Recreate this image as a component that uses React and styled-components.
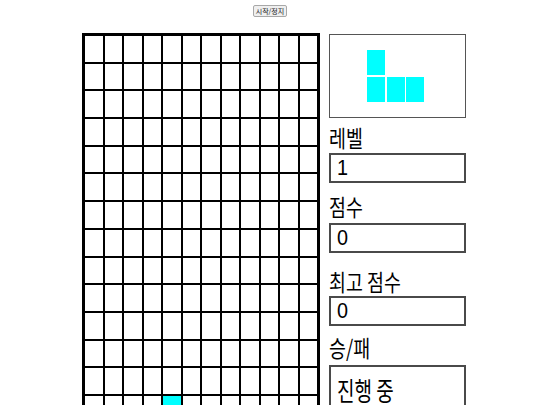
import React from 'react';
import styled, { createGlobalStyle } from 'styled-components';

const GlobalStyle = createGlobalStyle`
    html, body {
        margin: 0;
        padding: 0;
        background: #fff;
        overflow: hidden;
    }
`;

const Page = styled.div`
    padding-top: 5px;
    font-family: "Noto Sans CJK KR", "Noto Sans", sans-serif;
    color: #000;
`;

const Toolbar = styled.div`
    display: flex;
    justify-content: center;
`;

const StartButton = styled.button`
    width: 34px;
    height: 12px;
    padding: 0;
    font-family: "Noto Sans CJK KR", sans-serif;
    font-size: 7px;
    line-height: 10px;
    color: #222;
    background: #efefef;
    border: 1px solid #a8a8a8;
    border-radius: 2px;
`;

const Main = styled.div`
    display: flex;
    align-items: flex-start;
    gap: 9px;
    margin-top: 16px;
    padding-left: 82px;
`;

const Board = styled.div`
    box-sizing: border-box;
    width: 238px;
    display: grid;
    grid-template-columns: repeat(12, 1fr);
    grid-auto-rows: 25.7px;
    gap: 2px;
    padding: 2px;
    border: 1px solid #000;
    background: #000;
`;

const Cell = styled.div`
    background: ${(p) => (p.$filled ? '#00ffff' : '#fff')};
`;

const Panel = styled.div`
    width: 137px;
    display: flex;
    flex-direction: column;
`;

const Preview = styled.div`
    box-sizing: border-box;
    height: 84px;
    margin-top: 1px;
    padding-right: 4px;
    display: flex;
    align-items: center;
    justify-content: center;
    border: 1px solid #555;
`;

const Piece = styled.div`
    display: grid;
    grid-template-columns: repeat(3, 18px);
    grid-template-rows: repeat(2, 25px);
    gap: 1.5px;
`;

const PieceCell = styled.div`
    background: ${(p) => (p.$filled ? '#00ffff' : 'transparent')};
`;

const Label = styled.div`
    height: 24px;
    margin-top: ${(p) => p.$top}px;
    margin-bottom: ${(p) => p.$bottom}px;
    font-size: 23px;
    line-height: 24px;
    white-space: nowrap;

    span {
        display: inline-block;
        transform: scaleX(0.8);
        transform-origin: left center;
    }
`;

const ValueBox = styled.div`
    box-sizing: border-box;
    height: 30px;
    display: flex;
    align-items: center;
    padding-left: 6px;
    border: 2px solid #4a4a4a;
    font-family: "Liberation Sans", Arial, sans-serif;
    font-size: 22px;

    span {
        display: inline-block;
        transform: scaleX(0.9);
        transform-origin: left center;
    }
`;

const StatusBox = styled.div`
    box-sizing: border-box;
    min-height: 70px;
    padding: 8px 0 0 6px;
    border: 2px solid #4a4a4a;
    font-size: 26px;
    line-height: 30px;
    white-space: nowrap;

    span {
        display: inline-block;
        transform: scaleX(0.73);
        transform-origin: left center;
    }
`;

const ROWS = 20;
const COLS = 12;
const board = Array.from({ length: ROWS }, (_, r) =>
    Array.from({ length: COLS }, (_, c) => r === 13 && c === 4)
);

const nextPiece = [
    [1, 0, 0],
    [1, 1, 1],
];

const fields = [
    { label: '레벨', value: '1', top: 7, bottom: 4 },
    { label: '점수', value: '0', top: 11, bottom: 5 },
    { label: '최고 점수', value: '0', top: 16, bottom: 3 },
];

export default function App() {
    return (
        <Page>
            <GlobalStyle />
            <Toolbar>
                <StartButton type="button">시작/정지</StartButton>
            </Toolbar>
            <Main>
                <Board>
                    {board.map((row, r) =>
                        row.map((filled, c) => <Cell key={`${r}-${c}`} $filled={filled} />)
                    )}
                </Board>
                <Panel>
                    <Preview>
                        <Piece>
                            {nextPiece.map((row, r) =>
                                row.map((v, c) => <PieceCell key={`${r}-${c}`} $filled={!!v} />)
                            )}
                        </Piece>
                    </Preview>
                    {fields.map((f) => (
                        <React.Fragment key={f.label}>
                            <Label $top={f.top} $bottom={f.bottom}>
                                <span>{f.label}</span>
                            </Label>
                            <ValueBox>
                                <span>{f.value}</span>
                            </ValueBox>
                        </React.Fragment>
                    ))}
                    <Label $top={9} $bottom={6}>
                        <span>승/패</span>
                    </Label>
                    <StatusBox>
                        <span>진행 중</span>
                    </StatusBox>
                </Panel>
            </Main>
        </Page>
    );
}
